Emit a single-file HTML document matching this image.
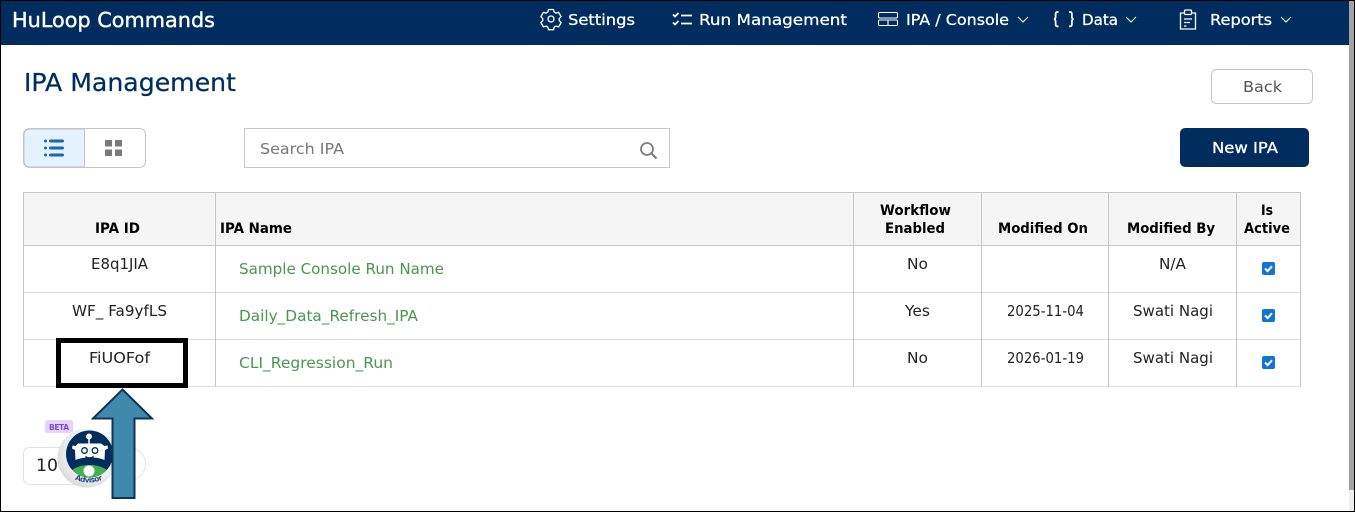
<!DOCTYPE html>
<html lang="en">
<head>
<meta charset="utf-8">
<title>IPA Management</title>
<style>
html,body{margin:0;padding:0;background:#fff;width:1355px;height:512px;overflow:hidden}
svg{display:block}
text{font-family:"DejaVu Sans","Liberation Sans",sans-serif}
</style>
</head>
<body>
<svg width="1355" height="512" viewBox="0 0 1355 512" xmlns="http://www.w3.org/2000/svg">
<rect width="1355" height="512" fill="#fff"/>
<!-- header -->
<rect x="0" y="0" width="1349" height="45" fill="#012d5e"/>
<!-- scrollbar -->
<rect x="1349" y="0" width="5" height="490" fill="#a3a3a3"/>
<rect x="1349" y="490" width="5" height="21" fill="#efefef"/>

<g fill="#fff" stroke="#fff" stroke-width="0.25">
<text x="12" y="27" font-size="20.5" textLength="203" lengthAdjust="spacingAndGlyphs" stroke-width="0.4">HuLoop Commands</text>
<text x="568" y="25" font-size="15" textLength="67" lengthAdjust="spacingAndGlyphs">Settings</text>
<text x="699" y="25" font-size="15" textLength="148" lengthAdjust="spacingAndGlyphs">Run Management</text>
<text x="906" y="25" font-size="15" textLength="103" lengthAdjust="spacingAndGlyphs">IPA / Console</text>
<text x="1082" y="25" font-size="15" textLength="36" lengthAdjust="spacingAndGlyphs">Data</text>
<text x="1210" y="25" font-size="15" textLength="62" lengthAdjust="spacingAndGlyphs">Reports</text>
</g>

<!-- nav icons -->
<g fill="none" stroke="#fff" stroke-width="1.3">
<!-- gear -->
<path d="M548.5 9.5h5l.7 2.6 1.8 1 2.6-.8 2.5 4.4-1.9 1.9v2l1.9 1.9-2.5 4.4-2.6-.8-1.8 1-.7 2.6h-5l-.7-2.6-1.8-1-2.6.8-2.5-4.4 1.9-1.9v-2l-1.9-1.9 2.5-4.4 2.6.8 1.8-1z" stroke-linejoin="round"/>
<circle cx="551" cy="19" r="3"/>
<!-- checklist -->
<path d="M673 14.5l2 2 3.5-3.5M673 22.5l2 2 3.5-3.5" stroke-width="1.7"/>
<path d="M681 15.5h11M681 23.5h11" stroke-width="1.7"/>
<!-- table -->
<rect x="878.5" y="12.5" width="19" height="5.5" rx="1.2" stroke-width="1.1"/>
<rect x="878.5" y="20" width="19" height="5.5" rx="1.2" stroke-width="1.1"/>
<path d="M888 20v5.5" stroke-width="1.1"/>
<!-- chevrons -->
<path d="M1018 17l5 5 5-5M1126 17l5 5 5-5M1281 17l5 5 5-5" stroke-width="1.1"/>
<!-- braces -->
<path d="M1058.5 12h-1c-1.3 0-1.9.7-1.9 2v3c0 1.2-.5 2-1.6 2.2 1.100.2 1.600 1 1.600 2.200v3c0 1.300.6 2 1.900 2h1M1069 12h1c1.300 0 1.900.7 1.900 2v3c0 1.200.5 2 1.600 2.200-1.100.2-1.600 1-1.600 2.200v3c0 1.300-.6 2-1.900 2h-1" stroke-width="1.7"/>
<!-- clipboard -->
<path d="M1184 13h-3.500v16h15V13H1192"/>
<rect x="1184.500" y="10" width="7" height="4.500" rx="1"/>
<path d="M1184 19h8M1184 22.500h6M1184 26h2.500" stroke-width="1.200"/>
</g>

<!-- title -->
<text x="24" y="91" font-size="24.5" fill="#012d5e" stroke="#012d5e" stroke-width="0.25" textLength="212" lengthAdjust="spacingAndGlyphs">IPA Management</text>

<!-- Back -->
<rect x="1211.500" y="69.500" width="101" height="34" rx="5" fill="#fff" stroke="#c6c6c6"/>
<text x="1243" y="92" font-size="15.500" fill="#555" textLength="39" lengthAdjust="spacingAndGlyphs">Back</text>

<!-- view toggle -->
<rect x="23.500" y="128.500" width="122" height="39" rx="6" fill="#fff" stroke="#c4c4c4"/>
<path d="M84.500 129H30a6 6 0 0 0-6 6v26a6 6 0 0 0 6 6h54.500z" fill="#e3f2fd" stroke="#c4c4c4" stroke-width="1"/>
<g fill="#1a66b5">
<rect x="49" y="139.500" width="15" height="3" rx="1.500"/>
<rect x="49" y="146.500" width="15" height="3" rx="1.500"/>
<rect x="49" y="153.500" width="15" height="3" rx="1.500"/>
<circle cx="45.500" cy="141" r="1.500"/><circle cx="45.500" cy="148" r="1.500"/><circle cx="45.500" cy="155" r="1.500"/>
</g>
<g fill="#7b7b7b">
<rect x="105" y="140" width="7" height="6.500"/><rect x="115" y="140" width="7" height="6.500"/>
<rect x="105" y="149.500" width="7" height="6.500"/><rect x="115" y="149.500" width="7" height="6.500"/>
</g>

<!-- search -->
<rect x="244.500" y="128.500" width="425" height="39" fill="#fff" stroke="#c8c8c8"/>
<text x="260" y="154" font-size="15.500" fill="#777" textLength="84" lengthAdjust="spacingAndGlyphs">Search IPA</text>
<circle cx="647" cy="149" r="6" fill="none" stroke="#7d7d7d" stroke-width="1.800"/>
<path d="M651.500 153.500l5 5" stroke="#7d7d7d" stroke-width="2" fill="none"/>

<!-- New IPA -->
<rect x="1180" y="128" width="129" height="39" rx="5" fill="#012d5e"/>
<text x="1212" y="153" font-size="15.500" fill="#fff" stroke="#fff" stroke-width="0.300" textLength="66" lengthAdjust="spacingAndGlyphs">New IPA</text>

<!-- table -->
<rect x="24" y="193" width="1276" height="52" fill="#f5f5f5"/>
<g stroke="#c6c6c6" fill="none" stroke-width="1">
<rect x="23.500" y="192.500" width="1277" height="194"/>
<path d="M23.500 245.500h1277"/>
<path d="M215.500 192.500v194M853.500 192.500v194M981.500 192.500v194M1108.500 192.500v194M1236.500 192.500v194"/>
</g>
<g stroke="#dedede" stroke-width="1">
<path d="M24 292.500h1276M24 339.500h1276M24 386.500h1276"/>
</g>
<g stroke="#c6c6c6" stroke-width="1">
<path d="M215.500 246v140M853.500 246v140M981.500 246v140M1108.500 246v140M1236.500 246v140"/>
</g>

<g font-size="14.500" font-weight="bold" fill="#000">
<text x="95" y="233" textLength="45" lengthAdjust="spacingAndGlyphs">IPA ID</text>
<text x="220" y="233" textLength="72" lengthAdjust="spacingAndGlyphs">IPA Name</text>
<text x="880" y="215" textLength="71" lengthAdjust="spacingAndGlyphs">Workflow</text>
<text x="885" y="233" textLength="60" lengthAdjust="spacingAndGlyphs">Enabled</text>
<text x="998" y="233" textLength="90" lengthAdjust="spacingAndGlyphs">Modified On</text>
<text x="1127" y="233" textLength="88" lengthAdjust="spacingAndGlyphs">Modified By</text>
<text x="1261" y="215" textLength="12" lengthAdjust="spacingAndGlyphs">Is</text>
<text x="1244" y="233" textLength="46" lengthAdjust="spacingAndGlyphs">Active</text>
</g>

<g font-size="15" fill="#222">
<text x="91" y="269" textLength="57" lengthAdjust="spacingAndGlyphs">E8q1JIA</text>
<text x="72" y="316" textLength="95" lengthAdjust="spacingAndGlyphs">WF_ Fa9yfLS</text>
<text x="89" y="363" textLength="61" lengthAdjust="spacingAndGlyphs">FiUOFof</text>
<text x="907" y="269" textLength="21" lengthAdjust="spacingAndGlyphs">No</text>
<text x="905" y="316" textLength="25" lengthAdjust="spacingAndGlyphs">Yes</text>
<text x="907" y="363" textLength="21" lengthAdjust="spacingAndGlyphs">No</text>
<text x="1007" y="316" textLength="77" lengthAdjust="spacingAndGlyphs">2025-11-04</text>
<text x="1007" y="363" textLength="77" lengthAdjust="spacingAndGlyphs">2026-01-19</text>
<text x="1159" y="269" textLength="27" lengthAdjust="spacingAndGlyphs">N/A</text>
<text x="1133" y="316" textLength="80" lengthAdjust="spacingAndGlyphs">Swati Nagi</text>
<text x="1133" y="363" textLength="80" lengthAdjust="spacingAndGlyphs">Swati Nagi</text>
</g>

<g font-size="15" fill="#4c9550">
<text x="239" y="274" textLength="205" lengthAdjust="spacingAndGlyphs">Sample Console Run Name</text>
<text x="239" y="321" textLength="179" lengthAdjust="spacingAndGlyphs">Daily_Data_Refresh_IPA</text>
<text x="239" y="368" textLength="154" lengthAdjust="spacingAndGlyphs">CLI_Regression_Run</text>
</g>

<!-- checkboxes -->
<g>
<rect x="1262" y="262" width="13" height="13" rx="2" fill="#0f75d8"/>
<path d="M1265 268.500l2.600 2.700 4.400-5" fill="none" stroke="#fff" stroke-width="2"/>
<rect x="1262" y="309" width="13" height="13" rx="2" fill="#0f75d8"/>
<path d="M1265 315.500l2.600 2.700 4.400-5" fill="none" stroke="#fff" stroke-width="2"/>
<rect x="1262" y="356" width="13" height="13" rx="2" fill="#0f75d8"/>
<path d="M1265 362.500l2.600 2.700 4.400-5" fill="none" stroke="#fff" stroke-width="2"/>
</g>

<!-- page size selector -->
<rect x="23.500" y="447.500" width="75" height="37" rx="6" fill="#fff" stroke="#e3e3e3"/>
<text x="36" y="471" font-size="16.500" fill="#222" textLength="33" lengthAdjust="spacingAndGlyphs">100</text>
<rect x="110" y="447.500" width="35.500" height="33" rx="16.500" fill="#fff" stroke="#e3e3e3"/>

<!-- advisor badge -->
<defs>
<radialGradient id="halo" cx="0.58" cy="0.42" r="0.62">
<stop offset="0.6" stop-color="#f6f6f6"/><stop offset="1" stop-color="#d8d8d8"/>
</radialGradient>
<clipPath id="disc"><circle cx="89.500" cy="454" r="23.500"/></clipPath>
<path id="advarc" d="M72 478Q89 487 106 478"/>
</defs>
<circle cx="87" cy="458" r="29.500" fill="url(#halo)"/>
<circle cx="89.500" cy="454" r="23.500" fill="#012d5e"/>
<g clip-path="url(#disc)">
<path d="M64 480c5-11 15-15 25.500-15s20.500 4 25.500 15v8H64z" fill="#3fb24f"/>
<circle cx="89" cy="471" r="5.500" fill="#fff"/>
</g>
<path d="M78 443.500h23l3.500 2.500 3-.5.500 3-3 1.500-.5 10c-8-3.500-21-3.500-29 0l-.5-10-3-1.500.5-3 3 .5z" fill="#fff"/>
<circle cx="89" cy="436.500" r="3" fill="#fff"/>
<path d="M89 439v5" stroke="#fff" stroke-width="1.500"/>
<circle cx="84.500" cy="450.500" r="2.800" fill="#fff" stroke="#012d5e" stroke-width="1.300"/>
<circle cx="95" cy="450.500" r="2.800" fill="#fff" stroke="#012d5e" stroke-width="1.300"/>
<path d="M85.500 456.500c2 1.800 6 1.800 8 0" fill="none" stroke="#012d5e" stroke-width="1.200"/>
<text font-size="7.500" fill="#2e5380" font-weight="bold" x="0"><textPath href="#advarc" startOffset="3" textLength="29" lengthAdjust="spacing">Advisor</textPath></text>

<!-- beta -->
<rect x="45" y="420" width="28" height="13" rx="2.500" fill="#e4d3fb"/>
<text x="49" y="430" font-size="7.500" fill="#7c4fc6" font-weight="bold" textLength="20" lengthAdjust="spacing">BETA</text>

<!-- annotation box -->
<rect x="58.500" y="340.500" width="127" height="45" fill="none" stroke="#000" stroke-width="5"/>

<!-- arrow -->
<path d="M122.500 389.500L152 418.500H134.500V498H112.500V418.500H93z" fill="#3f89ad" stroke="#0c3558" stroke-width="2" stroke-linejoin="miter"/>

<!-- screenshot frame -->
<rect x="0" y="0" width="1355" height="1" fill="#000"/>
<rect x="0" y="0" width="1" height="512" fill="#000"/>
<rect x="0" y="511" width="1355" height="1" fill="#000"/>
<rect x="1354" y="0" width="1" height="512" fill="#000"/>
</svg>
</body>
</html>
